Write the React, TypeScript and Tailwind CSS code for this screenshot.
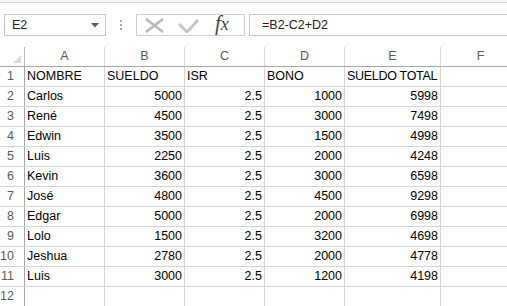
import React from "react";

const rows: (string | number)[][] = [
  ["NOMBRE", "SUELDO", "ISR", "BONO", "SUELDO TOTAL"],
  ["Carlos", 5000, 2.5, 1000, 5998],
  ["René", 4500, 2.5, 3000, 7498],
  ["Edwin", 3500, 2.5, 1500, 4998],
  ["Luis", 2250, 2.5, 2000, 4248],
  ["Kevin", 3600, 2.5, 3000, 6598],
  ["José", 4800, 2.5, 4500, 9298],
  ["Edgar", 5000, 2.5, 2000, 6998],
  ["Lolo", 1500, 2.5, 3200, 4698],
  ["Jeshua", 2780, 2.5, 2000, 4778],
  ["Luis", 3000, 2.5, 1200, 4198],
  ["", "", "", "", ""],
];

const cols = ["A", "B", "C", "D", "E", "F"];
const widths = ["w-[80px]", "w-[80px]", "w-[80px]", "w-[80px]", "w-[96px]", "w-[80px]"];

export default function App() {
  return (
    <div
      className="w-[507px] h-[306px] overflow-hidden bg-white text-black"
      style={{ fontFamily: '"Liberation Sans", Arial, sans-serif' }}
    >
      <div className="h-[3px] bg-[#f3f3f3] border-b border-[#dadada]" />
      {/* formula bar */}
      <div className="flex items-center h-[44px]">
        <div className="ml-[4px] w-[102px] h-[22px] border border-[#c6c6c6] flex items-center justify-between pl-[7px] pr-[6px]">
          <span className="text-[12.5px] text-[#222]">E2</span>
          <svg width="8" height="5" viewBox="0 0 8 5">
            <path d="M0 0 L8 0 L4 4.5 Z" fill="#5a5a5a" />
          </svg>
        </div>
        <div className="w-[30px] flex flex-col items-center gap-[2px]">
          <div className="w-[2px] h-[2px] bg-[#a8a8a8]" />
          <div className="w-[2px] h-[2px] bg-[#a8a8a8]" />
          <div className="w-[2px] h-[2px] bg-[#a8a8a8]" />
        </div>
        <div className="w-[109px] h-[22px] border border-[#d0d0d0] flex items-center">
          <svg className="ml-[8px]" width="19" height="15" viewBox="0 0 19 15">
            <path d="M1 1 L18 14 M18 1 L1 14" stroke="#b8b8b8" strokeWidth="2.6" fill="none" />
          </svg>
          <svg className="ml-[14px]" width="21" height="15" viewBox="0 0 21 15">
            <path d="M1 6 L9 14 L20 2" stroke="#c4c4c4" strokeWidth="2.8" fill="none" />
          </svg>
          <span
            className="ml-[16px] text-[21px] italic leading-none text-[#444] -mt-[3px]"
            style={{ fontFamily: '"Liberation Serif", "Times New Roman", serif' }}
          >
            f<span className="text-[18px]">x</span>
          </span>
        </div>
        <div className="ml-[4px] flex-1 h-[22px] border-l border-t border-b border-[#c6c6c6] flex items-center pl-[12px]">
          <span className="text-[12.5px] text-[#222]">=B2-C2+D2</span>
        </div>
      </div>
      {/* grid */}
      <div className="text-[12.5px]">
        <div className="flex h-[20px] border-b border-[#a8a8a8]">
          <div className="w-[25px] shrink-0 border-r border-[#bcbcbc] relative">
            <svg className="absolute right-[3px] bottom-[3px]" width="8" height="8" viewBox="0 0 8 8">
              <path d="M8 0 L8 8 L0 8 Z" fill="#d9d9d9" />
            </svg>
          </div>
          {cols.map((c, i) => (
            <div
              key={c}
              className={`${widths[i]} shrink-0 border-r border-[#dadada] flex items-center justify-center text-[#5a5a5a]`}
            >
              {c}
            </div>
          ))}
        </div>
        {rows.map((r, ri) => (
          <div key={ri} className="flex h-[20px] border-b border-[#d4d4d4]">
            <div className="w-[25px] shrink-0 border-r border-[#a8a8a8] flex items-center justify-end pr-[10px] text-[#5a5a5a]">
              {ri + 1}
            </div>
            {[0, 1, 2, 3, 4, 5].map((ci) => {
              const v = ci < 5 ? r[ci] : "";
              const num = typeof v === "number";
              const tight = v === "SUELDO TOTAL";
              return (
                <div
                  key={ci}
                  className={`${widths[ci]} shrink-0 border-r border-[#d4d4d4] flex items-center whitespace-nowrap overflow-visible ${
                    num ? "justify-end pr-[2px]" : "justify-start pl-[2px]"
                  } ${tight ? "tracking-[-0.3px]" : ""}`}
                >
                  {v}
                </div>
              );
            })}
          </div>
        ))}
      </div>
    </div>
  );
}
